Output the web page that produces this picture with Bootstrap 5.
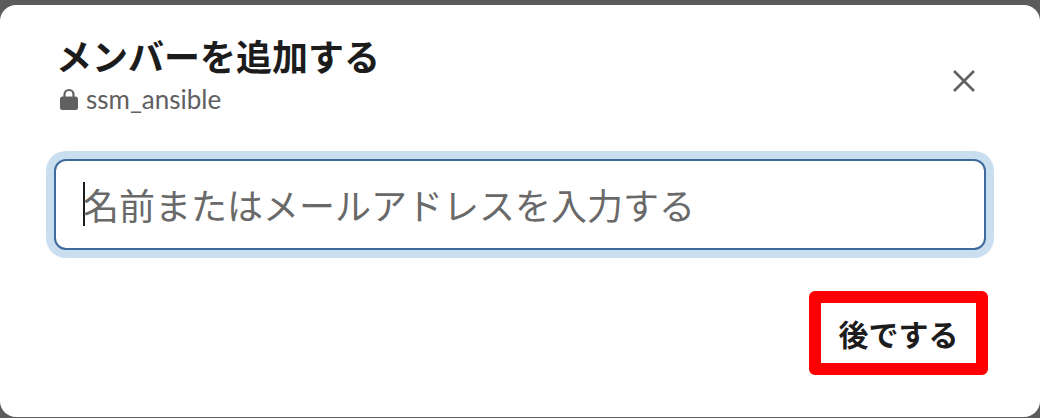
<!DOCTYPE html>
<html lang="ja">
<head>
<meta charset="utf-8">
<title>メンバーを追加する</title>
<link href="https://cdn.jsdelivr.net/npm/bootstrap@5.3.0/dist/css/bootstrap.min.css" rel="stylesheet">
<style>
html, body { height: 418px; overflow: hidden; }
body { background: #5b5b5b; padding: 5px 0 1px; font-family: Lato, "Noto Sans CJK JP", sans-serif; color: #1d1c1d; }
.dlg { height: 412px; background: #fff; border-radius: 16px; padding: 28px 48px 40px 48px; }
.dlg-title { font-family: "Noto Sans CJK JP", sans-serif; font-size: 36px; font-weight: 700; line-height: 44px; margin: 0 0 7px 8px; color: #1d1c1d; }
.dlg-sub { font-size: 26px; line-height: 30px; color: #616061; margin-left: 12px; gap: 8px; }
.dlg-x { background: none; border: 0; padding: 0; width: 28px; height: 28px; margin: 34px 14px 0 0; line-height: 0; }
.dlg-field { height: 91px; margin: 45px 6px 0 6px; width: auto; padding: 0 27px 2px; border: 2px solid #3f6a9c; border-radius: 12px; box-shadow: 0 0 0 8px #c9dff0; font-family: "Noto Sans CJK JP", sans-serif; font-size: 36px; color: #696969; background: #fff; }
.dlg-caret { width: 2px; height: 44px; background: #1d1c1d; margin-right: -2px; flex: none; }
.dlg-later { margin: 41px 4px 0 0; width: 179px; height: 84px; background: #fff; border: 12px solid #f00; border-radius: 6px; font-family: "Noto Sans CJK JP", sans-serif; font-size: 30px; font-weight: 700; color: #1d1c1d; padding: 0; }
.dlg-later:hover { background: #fff; border-color: #f00; color: #1d1c1d; }
</style>
</head>
<body>
<div class="dlg d-flex flex-column">
  <div class="d-flex justify-content-between align-items-start">
    <div>
      <h1 class="dlg-title">メンバーを追加する</h1>
      <div class="dlg-sub d-flex align-items-center">
        <svg width="18" height="22" viewBox="0 0 18 22" aria-hidden="true"><path d="M4.5 9V6.5a4.5 4.5 0 0 1 9 0V9" fill="none" stroke="#616061" stroke-width="2.2"/><rect x="0" y="8.5" width="18" height="13.5" rx="2.5" fill="#616061"/></svg>
        <span>ssm_ansible</span>
      </div>
    </div>
    <button class="dlg-x" type="button" aria-label="閉じる">
      <svg width="28" height="28" viewBox="0 0 28 28" aria-hidden="true"><path d="M4 4 24 24M24 4 4 24" stroke="#616061" stroke-width="2.6" fill="none"/></svg>
    </button>
  </div>
  <div class="dlg-field form-control d-flex align-items-center"><span class="dlg-caret"></span><span>名前またはメールアドレスを入力する</span></div>
  <div class="d-flex justify-content-end">
    <button class="btn dlg-later" type="button">後でする</button>
  </div>
</div>
<script src="https://cdn.jsdelivr.net/npm/bootstrap@5.3.0/dist/js/bootstrap.bundle.min.js"></script>
</body>
</html>
